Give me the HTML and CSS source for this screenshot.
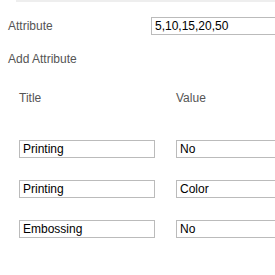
FILE: index.html
```html
<!DOCTYPE html>
<html lang="en">
<head>
  <meta charset="UTF-8">
  <title>Attributes</title>
  <link rel="stylesheet" href="styles.css">
</head>
<body>
  <div class="page">
    <div class="top-rule"></div>
    <div class="field-row">
      <label class="field-label" for="attrInput">Attribute</label>
      <input type="text" id="attrInput" class="field-input" value="5,10,15,20,50">
    </div>
    <div class="section-title">Add Attribute</div>
    <div class="attr-table">
      <div class="attr-head">Title</div>
      <div class="attr-head">Value</div>
      <input type="text" class="attr-input" value="Printing">
      <input type="text" class="attr-input attr-value" value="No">
      <input type="text" class="attr-input" value="Printing">
      <input type="text" class="attr-input attr-value" value="Color">
      <input type="text" class="attr-input" value="Embossing">
      <input type="text" class="attr-input attr-value" value="No">
    </div>
  </div>
</body>
</html>
```

FILE: styles.css
```css
* {
  margin: 0;
  padding: 0;
  box-sizing: border-box;
}

body {
  background-color: #fff;
  font-family: Arial, "Liberation Sans", sans-serif;
  font-size: 12px;
}

.page {
  width: 275px;
  overflow: hidden;
}

.top-rule {
  height: 2px;
  margin-left: 16px;
  background-color: #eee;
}

.field-row {
  display: flex;
  align-items: center;
  padding: 15px 0 0 8px;
}

.field-label {
  width: 143px;
  flex-shrink: 0;
  color: #555;
}

.field-input {
  width: 140px;
  height: 18px;
  flex-shrink: 0;
  padding: 0 3px;
  border: 1px solid #bbb;
  font-family: inherit;
  font-size: 12px;
  color: #000;
}

.section-title {
  padding: 17px 0 0 8px;
  color: #555;
}

.attr-table {
  display: grid;
  grid-template-columns: 157px 140px;
  row-gap: 22px;
  padding: 25px 0 0 19px;
}

.attr-head {
  color: #555;
  margin-bottom: 13px;
}

.attr-input {
  width: 136px;
  height: 18px;
  padding: 0 3px;
  border: 1px solid #bbb;
  font-family: inherit;
  font-size: 12px;
  color: #000;
}

.attr-value {
  width: 140px;
}
```
